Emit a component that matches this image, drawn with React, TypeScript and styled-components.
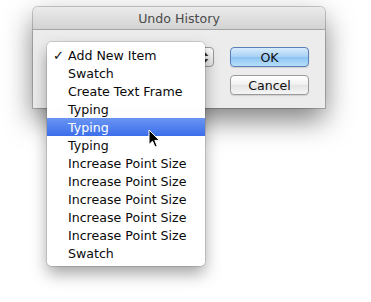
import React from "react";
import styled, { createGlobalStyle } from "styled-components";

const Global = createGlobalStyle`
  html, body { margin: 0; padding: 0; background: #ffffff; }
  body { font-family: "DejaVu Sans", "Liberation Sans", sans-serif; }
`;

const Stage = styled.div`
  position: relative;
  width: 371px;
  height: 302px;
  padding: 7px 0 0 33px;
  box-sizing: border-box;
`;

const Dialog = styled.div`
  width: 292px;
  height: 101px;
  border-radius: 5px 5px 0 0;
  background: #ececec;
  box-shadow: 0 12px 28px rgba(0, 0, 0, 0.5), 0 0 0 1px rgba(0, 0, 0, 0.2);
  display: flex;
  flex-direction: column;
  overflow: hidden;
`;

const TitleBar = styled.div`
  height: 22px;
  flex: none;
  display: flex;
  align-items: center;
  justify-content: center;
  background: linear-gradient(#ebebeb, #d3d3d3);
  border-bottom: 1px solid #a5a5a5;
  font-size: 12.6px;
  color: #4a4a4a;
`;

const Body = styled.div`
  flex: 1;
  display: flex;
  padding: 15px 16px 0 14px;
  gap: 16px;
`;

const PopupButton = styled.div`
  width: 167px;
  height: 20px;
  margin-top: 2px;
  box-sizing: border-box;
  border: 1px solid #9a9a9a;
  border-radius: 4px;
  background: linear-gradient(#ffffff, #e6e6e6);
  display: flex;
  justify-content: flex-end;
  align-items: center;
  padding-right: 4px;
`;

const Buttons = styled.div`
  display: flex;
  flex-direction: column;
  gap: 8px;
  margin-top: 2px;
`;

const PushButton = styled.div<{ $default?: boolean }>`
  width: 79px;
  height: 20px;
  box-sizing: border-box;
  border-radius: 4px;
  border: 1px solid ${(p) => (p.$default ? "#5a7fb5" : "#9a9a9a")};
  background: ${(p) =>
    p.$default
      ? "linear-gradient(#d7ecfc 0%, #a6d1f5 50%, #8cc3f2 51%, #b7dffb 100%)"
      : "linear-gradient(#ffffff, #f0f0f0 50%, #e4e4e4 51%, #f5f5f5)"};
  display: flex;
  align-items: center;
  justify-content: center;
  font-size: 12.6px;
  color: #111;
  box-shadow: 0 1px 1px rgba(0, 0, 0, 0.12);
`;

const Menu = styled.div`
  position: absolute;
  left: 47px;
  top: 42px;
  width: 158px;
  padding: 4px 0;
  background: rgba(255, 255, 255, 0.99);
  border-radius: 5px;
  box-shadow: 0 8px 16px rgba(0, 0, 0, 0.35), 0 0 0 1px rgba(0, 0, 0, 0.12);
`;

const Item = styled.div<{ $active?: boolean }>`
  height: 18px;
  display: flex;
  align-items: center;
  padding-left: 21px;
  position: relative;
  font-size: 12.6px;
  color: ${(p) => (p.$active ? "#ffffff" : "#0a0a0a")};
  background: ${(p) =>
    p.$active ? "linear-gradient(#6a95f3, #3b6ee9)" : "transparent"};
  white-space: nowrap;
`;

const Check = styled.span`
  position: absolute;
  left: 6px;
  font-size: 13px;
  font-weight: bold;
`;

const Cursor = styled.svg`
  position: absolute;
  left: 148px;
  top: 129px;
`;

const items = [
  "Add New Item",
  "Swatch",
  "Create Text Frame",
  "Typing",
  "Typing",
  "Typing",
  "Increase Point Size",
  "Increase Point Size",
  "Increase Point Size",
  "Increase Point Size",
  "Increase Point Size",
  "Swatch",
];

export default function App() {
  return (
    <>
      <Global />
      <Stage>
        <Dialog>
          <TitleBar>Undo History</TitleBar>
          <Body>
            <PopupButton>
              <svg width="7" height="11" viewBox="0 0 7 11">
                <path d="M3.5 0.5 L6.5 4 H0.5 Z" fill="#333" />
                <path d="M3.5 10.5 L6.5 7 H0.5 Z" fill="#333" />
              </svg>
            </PopupButton>
            <Buttons>
              <PushButton $default>OK</PushButton>
              <PushButton>Cancel</PushButton>
            </Buttons>
          </Body>
        </Dialog>
        <Menu>
          {items.map((t, i) => (
            <Item key={i} $active={i === 4}>
              {i === 0 && <Check>✓</Check>}
              {t}
            </Item>
          ))}
        </Menu>
        <Cursor width="13" height="20" viewBox="0 0 13 20">
          <path
            d="M1 1 L1 15.5 L4.5 12.2 L7 18 L9.2 17 L6.8 11.4 L11.5 11.4 Z"
            fill="#000"
            stroke="#fff"
            strokeWidth="1"
            strokeLinejoin="round"
          />
        </Cursor>
      </Stage>
    </>
  );
}
